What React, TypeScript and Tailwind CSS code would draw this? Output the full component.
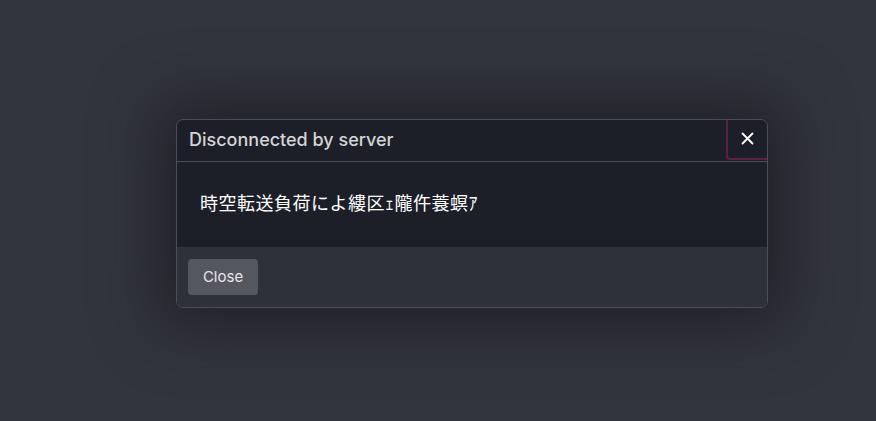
import React from 'react';

const App = () => {
  return (
    <div className="w-[876px] h-[421px] overflow-hidden bg-[#33353d] flex items-center" style={{ fontFamily: 'Inter, "Noto Sans CJK JP", sans-serif' }}>
      <div className="ml-[176px] mt-[5px] w-[592px] rounded-[7px] border border-[#4b4e57] bg-[#1d1f28] shadow-[0_0_60px_20px_rgba(20,20,26,0.55)] overflow-hidden">
        <div className="flex h-[42px] items-start border-b border-[#4b4e57]">
          <h5 className="flex-1 pl-3 pt-[9px] text-[18px] leading-[22px] font-medium text-[#d4d4d6]">
            Disconnected by server
          </h5>
          <button className="w-[41px] h-[40px] flex items-center justify-center border-l-2 border-b-2 border-[#5a2140] rounded-bl-[4px] text-white">
            <svg width="13" height="13" viewBox="0 0 13 13" fill="none" stroke="currentColor" strokeWidth="1.8" strokeLinecap="round">
              <path d="M1.5 1.5l10 10M11.5 1.5l-10 10" />
            </svg>
          </button>
        </div>
        <div className="h-[85px] flex items-center pl-[23px] pb-[3px]">
          <p className="text-[18px] text-white tracking-[0.5px]" style={{ fontFamily: '"Noto Sans CJK JP", sans-serif' }}>
            時空転送負荷によ縷区ｪ隴仵蓑螟ｱ
          </p>
        </div>
        <div className="h-[60px] bg-[#2f313a] flex items-center pl-[11px] pt-px">
          <button className="w-[70px] h-[36px] rounded-[4px] bg-[#55575f] text-[15px] text-[#e6e6e8]">
            Close
          </button>
        </div>
      </div>
    </div>
  );
};

export default App;
